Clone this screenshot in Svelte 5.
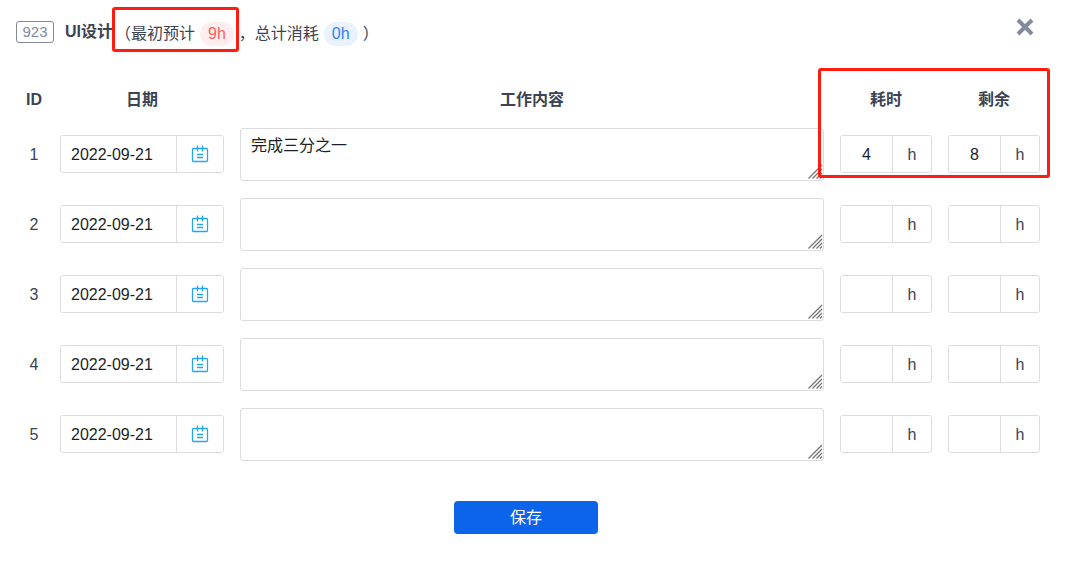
<script lang="ts">
  interface Entry {
    id: number;
    date: string;
    work: string;
    consumed: string;
    left: string;
  }

  const today = "2022-09-21";

  let entries = $state<Entry[]>([
    { id: 1, date: today, work: "完成三分之一", consumed: "4", left: "8" },
    { id: 2, date: today, work: "", consumed: "", left: "" },
    { id: 3, date: today, work: "", consumed: "", left: "" },
    { id: 4, date: today, work: "", consumed: "", left: "" },
    { id: 5, date: today, work: "", consumed: "", left: "" },
  ]);
</script>

<form class="panel" onsubmit={(e) => e.preventDefault()}>
  <header>
    <span class="task-id">923</span>
    <h1>UI设计</h1>
    <p class="summary">
      <span class="estimate">
        <span>（最初预计</span>
        <span class="pill red">9h</span>
        <i class="mark mark-estimate"></i>
      </span>
      <span>，总计消耗</span>
      <span class="pill blue">0h</span>
      <span>）</span>
    </p>
    <button type="button" class="close" aria-label="关闭">
      <svg viewBox="0 0 18 18" width="18" height="18">
        <path d="M2 2 L16 16 M16 2 L2 16" stroke="#838a9d" stroke-width="4" />
      </svg>
    </button>
  </header>

  <div class="table-wrap">
    <table>
      <thead>
        <tr>
          <th class="col-id">ID</th>
          <th class="col-date">日期</th>
          <th>工作内容</th>
          <th class="col-hours">耗时</th>
          <th class="col-hours">剩余</th>
        </tr>
      </thead>
      <tbody>
        {#each entries as entry (entry.id)}
          <tr>
            <td class="id">{entry.id}</td>
            <td>
              <div class="group">
                <input class="date" type="text" aria-label="日期" bind:value={entry.date} />
                <button type="button" class="addon calendar" aria-label="选择日期">
                  <svg viewBox="0 0 18 18" width="18" height="18" fill="none" stroke="#23a5f5">
                    <rect x="1.5" y="3.5" width="15" height="13" rx="1" stroke-width="1.3" />
                    <path d="M6.5 0.5 V6.5 M11.5 0.5 V6.5" stroke-width="1.3" />
                    <path d="M6 9.5 H12 M6 12.5 H12" stroke-width="1.3" />
                  </svg>
                </button>
              </div>
            </td>
            <td>
              <div class="work">
                <textarea aria-label="工作内容" bind:value={entry.work}></textarea>
                <svg class="grip" viewBox="0 0 15 15" width="15" height="15">
                  <path
                    d="M0.5 14.5 L14 1 M4.5 14.5 L14 5 M8.5 14.5 L14 9 M12 14.5 L14 12.5"
                    stroke="#757575"
                    stroke-width="1.3"
                  />
                </svg>
              </div>
            </td>
            <td>
              <label class="group">
                <input class="hours" type="text" aria-label="耗时" bind:value={entry.consumed} />
                <span class="addon">h</span>
              </label>
            </td>
            <td>
              <label class="group">
                <input class="hours" type="text" aria-label="剩余" bind:value={entry.left} />
                <span class="addon">h</span>
              </label>
            </td>
          </tr>
        {/each}
      </tbody>
    </table>
    <i class="mark mark-hours"></i>
  </div>

  <footer>
    <button type="submit" class="save">保存</button>
  </footer>
</form>

<style>
  :global(body) {
    margin: 0;
    background: #fff;
  }
  .panel,
  .panel input,
  .panel textarea,
  .panel button {
    font-family: "Liberation Sans", "Noto Sans CJK SC", sans-serif;
    font-size: 16px;
    line-height: 20px;
  }
  .panel *,
  .panel {
    box-sizing: border-box;
  }
  .panel {
    padding: 8px 18px 32px 16px;
    color: #3c4353;
  }

  header {
    display: flex;
    align-items: center;
    height: 48px;
  }
  .task-id {
    width: 38px;
    height: 22px;
    border: 1px solid #838a9d;
    border-radius: 3px;
    color: #838a9d;
    font-size: 15px;
    text-align: center;
  }
  h1 {
    margin: 0 2px 0 11px;
    font-size: 16px;
    font-weight: 700;
  }
  .summary {
    display: flex;
    align-items: center;
    margin: 4px 0 0;
  }
  .estimate {
    display: flex;
    align-items: center;
    position: relative;
  }
  .pill {
    margin: 0 5px;
    padding: 2px 8px;
    border-radius: 12px;
  }
  .red {
    background: #ffeeee;
    color: #fb5d5d;
  }
  .blue {
    background: #e9f2fe;
    color: #2e7fff;
  }
  .close {
    display: flex;
    margin: 0 14px 10px auto;
    padding: 0;
    border: 0;
    background: none;
    cursor: pointer;
  }

  .table-wrap {
    position: relative;
    padding-top: 24px;
  }
  table {
    width: 100%;
    border-collapse: collapse;
    table-layout: fixed;
  }
  th {
    height: 39px;
    padding: 0;
    font-weight: 700;
  }
  td {
    height: 70px;
    padding: 0 8px;
  }
  .col-id {
    width: 36px;
  }
  .col-date {
    width: 180px;
  }
  .col-hours {
    width: 108px;
  }
  .id {
    padding: 2px 0 0;
    text-align: center;
  }

  .group {
    display: flex;
    height: 38px;
    border: 1px solid #dcdcdc;
    border-radius: 3px;
    overflow: hidden;
  }
  .group input {
    flex: 1;
    min-width: 0;
    padding: 2px 10px 0;
    border: 0;
    outline: 0;
    background: #fff;
    color: #1b1f28;
  }
  .group .hours {
    text-align: center;
  }
  .addon {
    display: flex;
    flex: 0 0 39px;
    align-items: center;
    justify-content: center;
    padding-top: 2px;
    border-left: 1px solid #dcdcdc;
  }
  .calendar {
    flex-basis: 47px;
    padding: 0;
    border-width: 0 0 0 1px;
    background: #fff;
    cursor: pointer;
  }

  .work {
    position: relative;
  }
  textarea {
    display: block;
    width: 100%;
    height: 53px;
    padding: 7px 10px;
    border: 1px solid #dcdcdc;
    border-radius: 3px;
    outline: 0;
    color: #1b1f28;
    resize: none;
  }
  .grip {
    position: absolute;
    right: 1px;
    bottom: 2px;
    pointer-events: none;
  }

  footer {
    display: flex;
    justify-content: center;
    padding: 32px 12px 0 0;
  }
  .panel .save {
    width: 144px;
    height: 33px;
    padding: 0;
    border: 0;
    border-radius: 4px;
    background: #0c64eb;
    color: #fff;
    cursor: pointer;
  }

  /* red highlight frames */
  .mark {
    position: absolute;
    border: 3px solid #ff1d12;
    border-radius: 3px;
    pointer-events: none;
  }
  .mark-estimate {
    inset: -15px 0 -6px -3px;
  }
  .mark-hours {
    top: 12px;
    right: -2px;
    width: 232px;
    height: 110px;
  }
</style>
